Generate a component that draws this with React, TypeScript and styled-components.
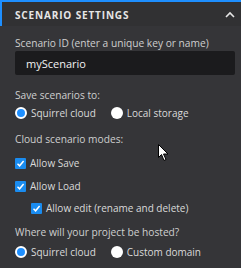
import React from "react";
import styled, { createGlobalStyle } from "styled-components";

const Global = createGlobalStyle`
  html, body { margin: 0; padding: 0; background: #353538; }
  body { font-family: "Open Sans", "Noto Sans", sans-serif; }
`;

const Panel = styled.section`
  position: relative;
  width: 241px;
  height: 268px;
  background: #353538;
  color: #d6d6d6;
  overflow: hidden;
`;

const Header = styled.header`
  display: flex;
  align-items: center;
  justify-content: space-between;
  height: 26px;
  padding: 1px 6px 0 15px;
  background: #313133;
  border-top: 2px solid #1e8fff;
  box-shadow: inset 2px 0 0 #1e8fff;
  box-sizing: border-box;
`;

const Title = styled.h3`
  margin: 0;
  font-size: 10px;
  font-weight: 700;
  letter-spacing: 0.85px;
  text-transform: uppercase;
  color: #e6e6e6;
`;

const Body = styled.div`
  display: flex;
  flex-direction: column;
  padding: 10px 6px 0 15px;
`;

const Label = styled.div<{ $top?: number }>`
  font-size: 10.2px;
  line-height: 14px;
  color: #cfcfcf;
  margin-top: ${({ $top }) => $top ?? 0}px;
`;

const Input = styled.input`
  margin-top: 1px;
  height: 24px;
  box-sizing: border-box;
  border: none;
  border-radius: 2px;
  background: #1b1b1d;
  color: #f2f2f2;
  font-family: inherit;
  font-size: 11px;
  padding: 0 11px;
  outline: none;
`;

const Row = styled.div<{ $indent?: number; $top?: number }>`
  display: flex;
  align-items: center;
  gap: 15px;
  height: 14px;
  margin-top: ${({ $top }) => $top ?? 0}px;
  padding-left: ${({ $indent }) => $indent ?? 0}px;
`;

const Option = styled.label`
  display: flex;
  align-items: center;
  gap: 4px;
  font-size: 10px;
  color: #dadada;
`;

const Radio = styled.span<{ $on?: boolean }>`
  width: 12px;
  height: 12px;
  border-radius: 50%;
  box-sizing: border-box;
  background: ${({ $on }) => ($on ? "#1e8fff" : "#ffffff")};
  border: ${({ $on }) => ($on ? "2.5px solid #ffffff" : "none")};
`;

const Box = styled.span`
  display: flex;
  align-items: center;
  justify-content: center;
  width: 11px;
  height: 11px;
  background: #1a8cf0;
  border-radius: 1px;
`;

const Cursor = styled.svg`
  position: absolute;
  left: 158px;
  top: 144px;
`;

const Check = () => (
  <Box>
    <svg width="9" height="9" viewBox="0 0 9 9">
      <path d="M1.5 4.8 L3.6 6.8 L7.6 2" stroke="#fff" strokeWidth="1.5" fill="none" />
    </svg>
  </Box>
);

export default function App() {
  return (
    <Panel>
      <Global />
      <Header>
        <Title>Scenario Settings</Title>
        <svg width="10" height="8" viewBox="0 0 10 8">
          <path d="M1 6 L5 2 L9 6" stroke="#e6e6e6" strokeWidth="1.6" fill="none" />
        </svg>
      </Header>
      <Body>
        <Label>Scenario ID (enter a unique key or name)</Label>
        <Input defaultValue="myScenario" />
        <Label $top={13}>Save scenarios to:</Label>
        <Row $top={4}>
          <Option><Radio $on />Squirrel cloud</Option>
          <Option><Radio />Local storage</Option>
        </Row>
        <Label $top={12}>Cloud scenario modes:</Label>
        <Row $top={10}>
          <Option><Check />Allow Save</Option>
        </Row>
        <Row $top={9}>
          <Option><Check />Allow Load</Option>
        </Row>
        <Row $top={8} $indent={16}>
          <Option><Check />Allow edit (rename and delete)</Option>
        </Row>
        <Label $top={10}>Where will your project be hosted?</Label>
        <Row $top={6}>
          <Option><Radio $on />Squirrel cloud</Option>
          <Option><Radio />Custom domain</Option>
        </Row>
      </Body>
      <Cursor width="12" height="18" viewBox="0 0 12 18">
        <path d="M0.5 0.5 L0.5 13.5 L3.5 10.5 L6 16.5 L8 15.5 L5.5 10 L10 10 Z" fill="#fff" stroke="#000" strokeWidth="1" />
      </Cursor>
    </Panel>
  );
}
